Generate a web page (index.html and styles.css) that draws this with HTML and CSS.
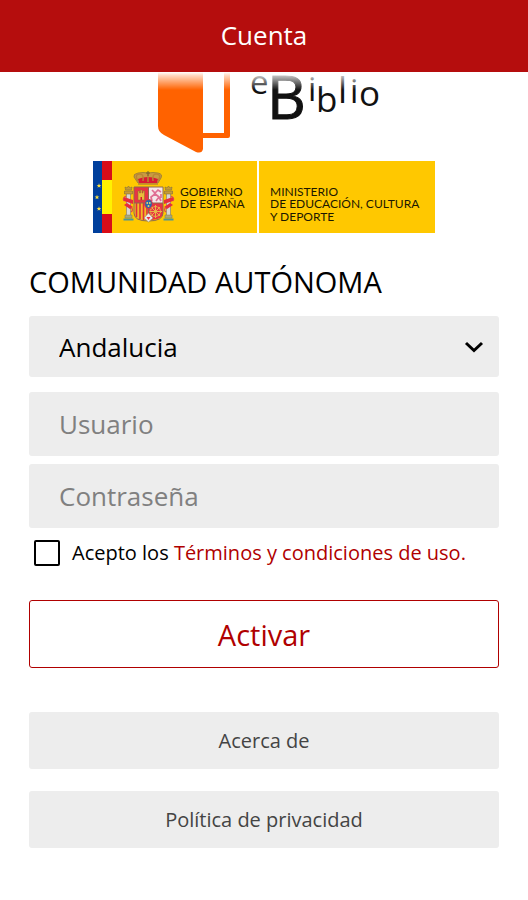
FILE: index.html
```html
<!DOCTYPE html>
<html lang="es">
<head>
<meta charset="utf-8">
<meta name="viewport" content="width=device-width, initial-scale=1">
<title>Cuenta</title>
<link rel="stylesheet" href="styles.css">
</head>
<body>
<header class="bar"><h1 class="bar-title">Cuenta</h1></header>
<main class="page">
  <svg class="logo" viewBox="93 72 342 161" role="img" aria-label="eBiblio, Gobierno de España, Ministerio de Educación, Cultura y Deporte">
    <defs>
      <linearGradient id="fade" gradientUnits="userSpaceOnUse" x1="0" y1="72" x2="0" y2="90">
        <stop offset="0" stop-color="#fff"/>
        <stop offset="0.2" stop-color="#fff" stop-opacity="0.75"/>
        <stop offset="1" stop-color="#fff" stop-opacity="0"/>
      </linearGradient>
    </defs>
    <!-- open book -->
    <path fill="#ff6200" d="M158 72H203V149Q202 154 196 152L164 135Q158 132 158 126Z"/>
    <path fill="#ff6200" d="M224 72H230V136Q230 138 228 138H202V133H224Z"/>
    <!-- word mark -->
    <g class="mark">
      <text x="250" y="94" font-size="33">e</text>
      <text class="mark-b" x="267" y="119" font-size="60">B</text>
      <text x="308" y="101" font-size="33">i</text>
      <text x="316" y="112" font-size="35">b</text>
      <text x="338" y="103" font-size="36">l</text>
      <text x="350" y="103" font-size="33">i</text>
      <text x="359" y="106" font-size="35">o</text>
    </g>
    <path fill="url(#fade)" d="M150 72H390V90H150Z"/>
    <!-- government plates -->
    <path fill="#ffc800" d="M112 161H257V233H112ZM259 161H435V233H259Z"/>
    <path fill="#003f9c" d="M93 161H103V233H93Z"/>
    <path fill="#d80c18" d="M102 161H112V233H102Z"/>
    <path fill="#fff200" d="M102 180H112V214H102Z"/>
    <g fill="#ffe23c">
      <path id="star" d="M99 183.200L99.600 184.900H101.400L100 186L100.500 187.700L99 186.700L97.500 187.700L98 186L96.600 184.900H98.400Z"/>
      <use href="#star" x="-2" y="11.500"/>
      <use href="#star" y="23"/>
    </g>
    <!-- coat of arms -->
    <g>
      <path fill="#c99b42" stroke="#87733b" stroke-width=".7" d="M138 183L134 177Q133 174 138 173Q143 172 148 173Q153 172 158 173Q163 174 161 178L158 183Z"/>
      <path fill="#d91b32" d="M138 179Q148 175 158 179L157 183H139Z"/>
      <path fill="none" stroke="#b98733" stroke-width="1.500" d="M138 181Q134 175 139 174Q144 173 143 181M158 181Q162 175 157 174Q152 173 153 181M148 173V182M138 184H158"/>
      <path fill="none" stroke="#75602e" stroke-width="1" d="M148 171V176M146 173H150"/>
      <path fill="#e83343" d="M134 187H148V203H134Z"/>
      <path fill="#f5e7e9" d="M148 187H163V203H148Z"/>
      <path fill="#f3ba25" d="M134 203H148V220Q134 222 134 213Z"/>
      <path fill="#e83343" d="M148 203H163V213Q163 220 148 220Z"/>
      <path fill="none" stroke="#df303c" stroke-width="1.600" d="M136.500 203V217M140 203V219M143.500 203V220M147 203V220"/>
      <path fill="#eabb3c" stroke="#99722c" stroke-width=".6" d="M138 191H139.500V193H140.500V190H142V193H143V191H144.500V200H138Z"/>
      <path fill="#d41a31" d="M140.500 197H142V200H140.500Z"/>
      <path fill="none" stroke="#df6e92" stroke-width="1.700" d="M152 190L155 193L158 190L161 192M154 193L159 197L156 201M159 197L161 201M155 194L151 197L152 201M161 198V194"/>
      <circle cx="155.500" cy="211.500" r="5" fill="none" stroke="#e7b348" stroke-width="1.200" stroke-dasharray="1.500 .6"/>
      <path fill="none" stroke="#e7b348" stroke-width="1" d="M151 207L160 216M160 207L151 216M155.500 205V218M149.500 211.500H162"/>
      <path fill="none" stroke="#8c6a50" stroke-width="1" d="M134 187H163V213Q163 221 148.500 221Q134 221 134 213ZM148.500 187V221M134 203H163"/>
      <path fill="#ececec" stroke="#9b8c69" stroke-width=".6" d="M144 218L148.500 213L153 218L148.500 222Z"/>
      <path fill="#e83343" d="M146.500 217H150.500L148.500 220Z"/>
      <ellipse cx="148.500" cy="204" rx="3.800" ry="4.400" fill="#246cad" stroke="#e83343"/>
      <path fill="#dec86b" d="M146.500 202H148V204H146.500ZM149 202H150.500V204H149ZM147.700 205H149.300V207H147.700Z"/>
      <g id="pillar">
        <path fill="#d7d7d3" stroke="#9a8c6d" stroke-width=".8" d="M126.500 193H130.500V216H126.500Z"/>
        <path fill="#c89a36" stroke="#806e40" stroke-width=".6" d="M124.500 191H132.500V194H124.500ZM125.500 190L125 187L127 188L128.500 186L130 188L132 187L131.500 190Z"/>
        <path fill="#e72c3c" d="M124 197L133 200V204L124 201ZM124 205L127 203L133 207L130 209Z"/>
        <path fill="none" stroke="#de4550" stroke-width="1.200" d="M126 196Q122 198 124 201M131 207Q134 210 131 212"/>
        <path fill="#aaa97e" stroke="#807d4b" stroke-width=".5" d="M125 215H132V218H125Z"/>
        <path stroke="#4e9697" stroke-width="2" d="M123.500 219.500H133.500"/>
      </g>
      <use href="#pillar" transform="translate(297 0) scale(-1 1)"/>
    </g>
    <g class="plate-text">
      <text x="180" y="196">GOBIERNO</text>
      <text x="180" y="208">DE ESPAÑA</text>
      <text x="270" y="196">MINISTERIO</text>
      <text x="270" y="208">DE EDUCACIÓN, CULTURA</text>
      <text x="270" y="221">Y DEPORTE</text>
    </g>
  </svg>

  <form class="form">
    <label class="region-label" for="region">COMUNIDAD AUTÓNOMA</label>
    <div class="select-wrap">
      <select class="field region" id="region"><option>Andalucia</option></select>
      <svg class="chevron" viewBox="0 0 20 14" aria-hidden="true"><path d="M2 3L10 10.500L18 3"/></svg>
    </div>
    <div class="credentials">
      <input class="field" type="text" placeholder="Usuario" aria-label="Usuario">
      <input class="field" type="password" placeholder="Contraseña" aria-label="Contraseña">
    </div>
    <div class="terms">
      <input class="check" type="checkbox" id="accept">
      <div><label for="accept">Acepto los</label> <a class="terms-link" href="#">Términos y condiciones de uso.</a></div>
    </div>
    <button class="activate" type="submit">Activar</button>
  </form>
  <div class="more">
    <button class="secondary" type="button">Acerca de</button>
    <button class="secondary" type="button">Política de privacidad</button>
  </div>
</main>
</body>
</html>
```
FILE: styles.css
```css
* {
  box-sizing: border-box;
}

body {
  margin: 0;
  background: #fff;
  color: #000;
  font-family: "Open Sans", sans-serif;
}

.bar {
  display: flex;
  align-items: center;
  justify-content: center;
  height: 72px;
  padding-bottom: 2px;
  background: #b50d0d;
  color: #fff;
}

.bar-title {
  margin: 0;
  font-size: 26px;
  font-weight: 400;
}

.page {
  padding: 0 29px 48px;
}

.logo {
  display: block;
  width: 100%;
  max-width: 342px;
  margin: 0 auto;
}

.mark {
  fill: #111;
  font-family: "Open Sans", sans-serif;
}

.mark-b {
  stroke: #111;
  stroke-width: 1px;
}

.plate-text {
  fill: #1c1800;
  font-family: Lato, sans-serif;
  font-size: 12px;
}

.form {
  display: flex;
  flex-direction: column;
}

.region-label {
  margin: 29px 0 14px;
  font-size: 29px;
  line-height: 40px;
}

.select-wrap {
  position: relative;
}

.field {
  display: block;
  width: 100%;
  height: 64px;
  padding: 0 30px;
  border: 0;
  border-radius: 3px;
  background: #ededed;
  color: #000;
  font-family: inherit;
  font-size: 26px;
}

.field::placeholder {
  color: #808080;
  opacity: 1;
}

.region {
  height: 61px;
  appearance: none;
}

.chevron {
  position: absolute;
  top: 24px;
  right: 15px;
  width: 20px;
  height: 14px;
  fill: none;
  stroke: #000;
  stroke-width: 3px;
  pointer-events: none;
}

.credentials {
  display: grid;
  gap: 8px;
  margin-top: 15px;
}

.terms {
  display: flex;
  align-items: center;
  gap: 12px;
  margin: 10px 0 32px;
  padding-left: 5px;
  font-size: 20px;
  line-height: 30px;
}

.check {
  flex: none;
  width: 26px;
  height: 26px;
  margin: 0;
  border: 2px solid #000;
  border-radius: 2px;
  background: #fff;
  appearance: none;
}

.check:checked {
  background: #b00000;
}

.terms-link {
  color: #b00000;
  text-decoration: none;
}

.activate {
  height: 68px;
  border: 1px solid #b00000;
  border-radius: 3px;
  background: #fff;
  color: #b00000;
  font-family: inherit;
  font-size: 29px;
}

.more {
  display: grid;
  gap: 22px;
  margin-top: 44px;
}

.secondary {
  height: 57px;
  border: 0;
  border-radius: 3px;
  background: #ededed;
  color: #444;
  font-family: inherit;
  font-size: 20px;
}
```
